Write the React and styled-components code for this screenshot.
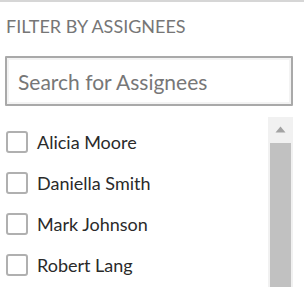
import React from 'react';
import styled, { createGlobalStyle } from 'styled-components';

const GlobalStyle = createGlobalStyle`
  html, body {
    margin: 0;
    padding: 0;
    background: #fff;
    overflow: hidden;
  }
  body {
    font-family: Lato, "Noto Sans", sans-serif;
  }
`;

const assignees = ['Alicia Moore', 'Daniella Smith', 'Mark Johnson', 'Robert Lang'];

const App = () => {
  return (
    <>
      <GlobalStyle />
      <Panel>
        <Heading>Filter by Assignees</Heading>
        <SearchInput type="text" placeholder="Search for Assignees" />
        <ListBox>
          <Items>
            {assignees.map((name) => (
              <Row key={name}>
                <Check type="checkbox" />
                <Name>{name}</Name>
              </Row>
            ))}
          </Items>
          <Scrollbar>
            <ArrowButton>
              <svg width="11" height="7" viewBox="0 0 11 7">
                <path d="M5.5 0.5 L10.5 6.5 L0.5 6.5 Z" fill="#a3a3a3" />
              </svg>
            </ArrowButton>
            <Thumb />
          </Scrollbar>
        </ListBox>
      </Panel>
    </>
  );
};

const Panel = styled.div`
  width: 304px;
  height: 287px;
  box-sizing: border-box;
  border-top: 2px solid #d6d6d6;
  padding: 13px 11px 0 5px;
  display: flex;
  flex-direction: column;
  overflow: hidden;
`;

const Heading = styled.div`
  flex-shrink: 0;
  margin: 0 0 19px 1px;
  font-size: 18px;
  line-height: 22px;
  color: #767676;
  text-transform: uppercase;
`;

const SearchInput = styled.input`
  flex-shrink: 0;
  box-sizing: border-box;
  width: 288px;
  height: 50px;
  margin: 0;
  padding: 0 10px 0 11px;
  border: 2px solid #a9a9a9;
  border-radius: 1px;
  box-shadow: inset 0 0 0 2px #f3f3f3;
  font-family: Lato, "Noto Sans", sans-serif;
  font-size: 21px;
  color: #333;
  outline: none;

  &::placeholder {
    color: #777;
  }
`;

const ListBox = styled.div`
  margin-top: 11px;
  width: 288px;
  height: 190px;
  display: flex;
  flex-shrink: 0;
`;

const Items = styled.div`
  flex: 1;
  display: flex;
  flex-direction: column;
  gap: 19px;
  padding-top: 14px;
`;

const Row = styled.label`
  display: flex;
  align-items: center;
  gap: 9px;
  height: 22px;
  padding-left: 1px;
`;

const Check = styled.input`
  appearance: none;
  margin: 0;
  width: 22px;
  height: 22px;
  box-sizing: border-box;
  border: 2px solid #b0b0b0;
  border-radius: 3px;
  background: #fff;
`;

const Name = styled.span`
  font-size: 18px;
  color: #2a2a2a;
  white-space: nowrap;
`;

const Scrollbar = styled.div`
  width: 25px;
  background: #f1f1f1;
  display: flex;
  flex-direction: column;
  align-items: center;
`;

const ArrowButton = styled.div`
  height: 26px;
  width: 100%;
  display: flex;
  align-items: center;
  justify-content: center;
  padding-bottom: 2px;
  box-sizing: border-box;
`;

const Thumb = styled.div`
  width: 21px;
  flex: 1;
  background: #c1c1c1;
`;

export default App;
